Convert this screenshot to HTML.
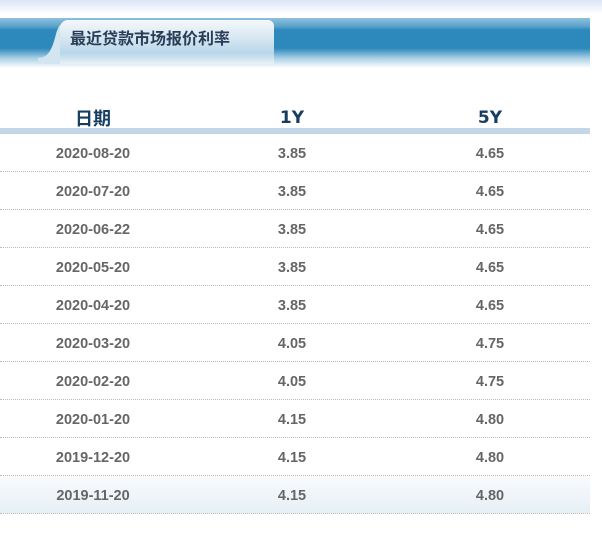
<html><head><style>
body{margin:0;width:602px;height:534px;background:#fff;font-family:"Liberation Sans",Arial,sans-serif;position:relative;overflow:hidden}
.top{position:absolute;left:0;top:0;width:602px;height:14px;background:linear-gradient(#dde4f7,#fff)}
.band{position:absolute;left:0;top:18px;width:590px;height:50px;background:linear-gradient(#8fc0dc 0,#5ea4cc 8px,#2d88bb 12px,#2d88bb 30px,#5aa3cc 34px,#a9cfe4 40px,#fff 50px)}
.tab{position:absolute;left:60px;top:20px;width:214px;height:44px;border-radius:8px 6px 0 0;background:linear-gradient(#f4f8fb,#d7e7f1 40%,#b9d6e8 75%,#e8f2f8 100%)}
.curve{position:absolute;left:38px;top:20px;width:36px;height:44px}
.tab span{position:absolute;left:10px;top:10px;font:bold 16px/20px "Liberation Sans","Noto Sans CJK SC",sans-serif;color:#2a3e5a}
.hdr{position:absolute;top:107px;left:0;width:590px;height:22px;font:bold 17px/22px "DejaVu Sans","Noto Sans CJK SC",sans-serif;color:#163e62}
.hdr div,.row div{position:absolute;width:140px;text-align:center}
.hdr .c1{font:bold 18px/22px "Noto Sans CJK SC",sans-serif;top:0px}
.c1{left:23px}.c2{left:222px}.c3{left:420px}
.line{position:absolute;left:0;top:128px;width:590px;height:6px;background:#c3d7e8}
.row{position:absolute;left:0;width:590px;height:37px;border-bottom:1px dotted #bbb;font-weight:bold;font-size:14.5px;line-height:17px;color:#666}
.row div{top:12px}
</style></head><body>
<div class="top"></div>
<div class="band"></div>
<svg class="curve" viewBox="0 0 36 44"><path d="M0 38 C10 38 14 30 18 14 C21 3 26 0 36 0 L36 44 L0 44Z" fill="#d3e5f0"/></svg>
<div class="tab"><span>最近贷款市场报价利率</span></div>
<div class="hdr"><div class="c1">日期</div><div class="c2">1Y</div><div class="c3">5Y</div></div>
<div class="line"></div>
<div class="row" style="top:134px"><div class="c1">2020-08-20</div><div class="c2">3.85</div><div class="c3">4.65</div></div>
<div class="row" style="top:172px"><div class="c1">2020-07-20</div><div class="c2">3.85</div><div class="c3">4.65</div></div>
<div class="row" style="top:210px"><div class="c1">2020-06-22</div><div class="c2">3.85</div><div class="c3">4.65</div></div>
<div class="row" style="top:248px"><div class="c1">2020-05-20</div><div class="c2">3.85</div><div class="c3">4.65</div></div>
<div class="row" style="top:286px"><div class="c1">2020-04-20</div><div class="c2">3.85</div><div class="c3">4.65</div></div>
<div class="row" style="top:324px"><div class="c1">2020-03-20</div><div class="c2">4.05</div><div class="c3">4.75</div></div>
<div class="row" style="top:362px"><div class="c1">2020-02-20</div><div class="c2">4.05</div><div class="c3">4.75</div></div>
<div class="row" style="top:400px"><div class="c1">2020-01-20</div><div class="c2">4.15</div><div class="c3">4.80</div></div>
<div class="row" style="top:438px"><div class="c1">2019-12-20</div><div class="c2">4.15</div><div class="c3">4.80</div></div>
<div class="row" style="top:476px;background:linear-gradient(#f9fbfd,#e6eff6)"><div class="c1">2019-11-20</div><div class="c2">4.15</div><div class="c3">4.80</div></div>
</body></html>
